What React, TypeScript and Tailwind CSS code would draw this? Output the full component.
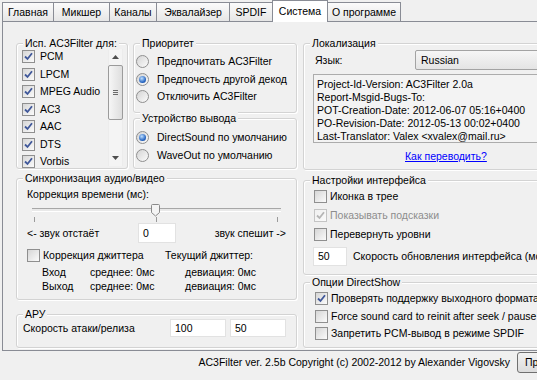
import React from 'react';

const tabs: [string, number, boolean?][] = [
  ['Главная', 52],
  ['Микшер', 57],
  ['Каналы', 48],
  ['Эквалайзер', 74],
  ['SPDIF', 44],
  ['Система', 56, true],
  ['О программе', 74],
];

function Check({ checked = false, disabled = false }: { checked?: boolean; disabled?: boolean }) {
  return (
    <span
      className={`w-[13px] h-[13px] shrink-0 border flex items-center justify-center bg-linear-to-br ${
        disabled ? 'border-[#c4c4c4] from-[#f0f0f0] to-[#fafafa]' : 'border-[#8f8f8f] from-[#d6d6d6] to-[#fbfbfb]'
      }`}
    >
      {checked && (
        <svg width="9" height="9" viewBox="0 0 9 9">
          <path d="M1 4.5 L3.5 7 L8 1.2" fill="none" stroke={disabled ? '#b5b5b5' : '#40589a'} strokeWidth="1.8" />
        </svg>
      )}
    </span>
  );
}

function Radio({ checked = false }: { checked?: boolean }) {
  return (
    <span className="w-[13px] h-[13px] shrink-0 rounded-full border border-[#8f8f8f] bg-linear-to-br from-[#d4d4d4] to-[#fbfbfb] flex items-center justify-center">
      {checked && (
        <span className="w-[7px] h-[7px] rounded-full bg-[radial-gradient(circle_at_40%_35%,#bfe0ff,#2463c0_65%,#173f86)]" />
      )}
    </span>
  );
}

function Group({ label, className, children }: { label: string; className?: string; children?: React.ReactNode }) {
  return (
    <div
      className={`relative shrink-0 rounded-[3px] border border-[#d3d3d3] shadow-[inset_1px_1px_0_#ffffff,1px_1px_0_#ffffff] ${className ?? ''}`}
    >
      <span className="absolute -top-[7px] left-[6px] px-[2px] bg-[#f0f0f0] leading-[13px] whitespace-nowrap">{label}</span>
      {children}
    </div>
  );
}

function Edit({ value, className }: { value: string; className?: string }) {
  return (
    <div className={`shrink-0 bg-white border border-[#e2e2e2] pl-[4px] flex items-center ${className ?? ''}`}>{value}</div>
  );
}

function CheckRow({ label, checked, disabled, h }: { label: string; checked?: boolean; disabled?: boolean; h: string }) {
  return (
    <div className={`flex items-center gap-[3px] whitespace-nowrap ${h}`}>
      <Check checked={checked} disabled={disabled} />
      <span className={disabled ? 'text-[#8d8d8d]' : ''}>{label}</span>
    </div>
  );
}

function RadioRow({ label, checked }: { label: string; checked?: boolean }) {
  return (
    <div className="flex items-center gap-[8px] h-[17.5px] whitespace-nowrap">
      <Radio checked={checked} />
      <span>{label}</span>
    </div>
  );
}

export default function App() {
  const formats = ['PCM', 'LPCM', 'MPEG Audio', 'AC3', 'AAC', 'DTS', 'Vorbis'];

  return (
    <div className="w-[537px] h-[380px] overflow-hidden bg-[#f0f0f0] text-black text-[10.5px] leading-[13px] font-['Liberation_Sans',Arial,sans-serif]">
      {/* tabs */}
      <div className="flex items-end h-[21px] ml-[2px] relative z-10">
        {tabs.map(([name, w, active]) => (
          <div
            key={name}
            style={{ width: w }}
            className={`-mr-px border border-b-0 border-[#898c95] flex items-center justify-center whitespace-nowrap ${
              active ? 'h-[22px] -mb-px bg-white relative z-10' : 'h-[19px] bg-linear-to-b from-[#fbfbfb] to-[#e6e6e6]'
            }`}
          >
            {name}
          </div>
        ))}
      </div>

      {/* page */}
      <div className="ml-[2px] w-[600px] h-[330px] border border-[#898c95] bg-[#f0f0f0] pt-[21px] pl-[13px] flex gap-[6px]">
        {/* left column */}
        <div className="w-[281px] flex flex-col">
          <div className="flex gap-[5px]">
            <Group label="Исп. AC3Filter для:" className="w-[112px] h-[126px]">
              <div className="flex pt-[4px] pl-[5px] pr-[4px] h-full overflow-hidden">
                <div className="flex-1 flex flex-col">
                  {formats.map((f) => (
                    <div key={f} className="flex items-center gap-[5px] h-[17.5px] shrink-0 whitespace-nowrap">
                      <Check checked />
                      <span>{f}</span>
                    </div>
                  ))}
                </div>
                <div className="w-[15px] h-[117px] mt-px flex flex-col items-center bg-[#f4f4f4] border-x border-[#ececec]">
                  <div className="h-[16px] flex items-center justify-center">
                    <svg width="7" height="4" viewBox="0 0 7 4">
                      <path d="M0 4 L3.5 0 L7 4 Z" fill="#4d4d4d" />
                    </svg>
                  </div>
                  <div className="w-[15px] h-[55px] rounded-[2px] border border-[#9b9b9b] bg-linear-to-r from-[#f6f6f6] to-[#dedede] flex flex-col items-center justify-center gap-[1px]">
                    <span className="w-[5px] h-px bg-[#6b6b6b]" />
                    <span className="w-[5px] h-px bg-[#6b6b6b]" />
                    <span className="w-[5px] h-px bg-[#6b6b6b]" />
                  </div>
                  <div className="flex-1" />
                  <div className="h-[16px] flex items-center justify-center">
                    <svg width="7" height="4" viewBox="0 0 7 4">
                      <path d="M0 0 L3.5 4 L7 0 Z" fill="#4d4d4d" />
                    </svg>
                  </div>
                </div>
              </div>
            </Group>
            <div className="w-[164px] flex flex-col">
              <Group label="Приоритет" className="h-[70px]">
                <div className="pt-[9px] pl-[2px] overflow-hidden">
                  <RadioRow label="Предпочитать AC3Filter" />
                  <RadioRow label="Предпочесть другой декод" checked />
                  <RadioRow label="Отключить AC3Filter" />
                </div>
              </Group>
              <Group label="Устройство вывода" className="h-[51px] mt-[5px]">
                <div className="pt-[10px] pl-[2px] overflow-hidden">
                  <RadioRow label="DirectSound по умолчанию" checked />
                  <RadioRow label="WaveOut по умолчанию" />
                </div>
              </Group>
            </div>
          </div>

          <Group label="Синхронизация аудио/видео" className="h-[122px] mt-[9px]">
            <div className="pl-[10px] pt-[9px]">Коррекция времени (мс):</div>
            <svg width="252" height="20" viewBox="0 0 252 20" className="ml-[14px] mt-[1px] block">
              <rect x="1" y="6" width="249" height="1" fill="#a7a7a7" />
              <rect x="1" y="7" width="249" height="2" fill="#e9e9e9" />
              <rect x="1" y="9" width="249" height="1" fill="#ffffff" />
              <path d="M121.5 2.5 h6 a1 1 0 0 1 1 1 v7 l-4 3.5 l-4 -3.5 v-7 a1 1 0 0 1 1 -1 z" fill="#f4f4f4" stroke="#8a8a8a" />
              <rect x="3" y="15" width="1" height="5" fill="#9a9a9a" />
              <rect x="125" y="15" width="1" height="5" fill="#9a9a9a" />
              <rect x="246" y="15" width="1" height="5" fill="#9a9a9a" />
            </svg>
            <div className="flex items-center h-[20px] mt-[1px] pl-[10px] pr-[10px] whitespace-nowrap">
              <span className="w-[111px]">&lt;- звук отстаёт</span>
              <Edit value="0" className="w-[38px] h-[20px]" />
              <span className="flex-1 text-right">звук спешит -&gt;</span>
            </div>
            <div className="flex items-center h-[13px] mt-[6px] pl-[10px] whitespace-nowrap">
              <Check />
              <span className="ml-[3px] w-[122px]">Коррекция джиттера</span>
              <span>Текущий джиттер:</span>
            </div>
            <div className="mt-[3px] pl-[25px] leading-[14px] whitespace-nowrap">
              <div className="flex">
                <span className="w-[48px]">Вход</span>
                <span className="w-[95px]">среднее: 0мс</span>
                <span>девиация: 0мс</span>
              </div>
              <div className="flex">
                <span className="w-[48px]">Выход</span>
                <span className="w-[95px]">среднее: 0мс</span>
                <span>девиация: 0мс</span>
              </div>
            </div>
          </Group>

          <Group label="АРУ" className="h-[34px] mt-[14px]">
            <div className="flex items-center h-[18px] mt-[4px] pl-[6px] whitespace-nowrap">
              <span className="w-[147px]">Скорость атаки/релиза</span>
              <Edit value="100" className="w-[56px] h-[18px]" />
              <Edit value="50" className="w-[56px] h-[18px] ml-[4px]" />
            </div>
          </Group>
        </div>

        {/* right column */}
        <div className="w-[290px] flex flex-col">
          <Group label="Локализация" className="h-[127px]">
            <div className="flex items-center h-[20px] mt-[6px] pl-[11px] whitespace-nowrap">
              <span className="w-[100px]">Язык:</span>
              <div className="w-[160px] h-[20px] border border-[#a3a3a3] rounded-[2px] bg-linear-to-b from-[#f6f6f6] to-[#e4e4e4] pl-[5px] flex items-center">
                Russian
              </div>
            </div>
            <div className="ml-[9px] mt-[4px] h-[69px] border border-[#acacac] bg-[#f3f3f3] pl-[3px] pt-[3px] whitespace-nowrap">
              <div>Project-Id-Version: AC3Filter 2.0a</div>
              <div>Report-Msgid-Bugs-To:</div>
              <div>POT-Creation-Date: 2012-06-07 05:16+0400</div>
              <div>PO-Revision-Date: 2012-05-13 00:02+0400</div>
              <div>Last-Translator: Valex &lt;xvalex@mail.ru&gt;</div>
            </div>
            <div className="mt-[7px] pl-[101px]">
              <span className="text-[#0000ff] underline">Как переводить?</span>
            </div>
          </Group>

          <Group label="Настройки интерфейса" className="h-[95px] mt-[10px]">
            <div className="pt-[6px] pl-[10px]">
              <CheckRow label="Иконка в трее" h="h-[19px]" />
              <CheckRow label="Показывать подсказки" checked disabled h="h-[19px]" />
              <CheckRow label="Перевернуть уровни" h="h-[19px]" />
            </div>
            <div className="flex items-center mt-[3px] pl-[9px] whitespace-nowrap">
              <Edit value="50" className="w-[34px] h-[19px]" />
              <span className="ml-[6px]">Скорость обновления интерфейса (мс)</span>
            </div>
          </Group>

          <Group label="Опции DirectShow" className="h-[66px] mt-[7px]">
            <div className="pt-[7px] pl-[11px]">
              <CheckRow label="Проверять поддержку выходного формата" checked h="h-[17.5px]" />
              <CheckRow label="Force sound card to reinit after seek / pause" h="h-[17.5px]" />
              <CheckRow label="Запретить PCM-вывод в режиме SPDIF" h="h-[17.5px]" />
            </div>
          </Group>
        </div>
      </div>

      {/* footer */}
      <div className="w-[592px] flex items-center mt-px h-[21px] gap-[7px] whitespace-nowrap">
        <span className="flex-1 text-right">AC3Filter ver. 2.5b Copyright (c) 2002-2012 by Alexander Vigovsky</span>
        <div className="w-[75px] h-[21px] shrink-0 border border-[#707070] rounded-[3px] bg-linear-to-b from-[#f2f2f2] to-[#dcdcdc] flex items-center pl-[7px]">
          Применить
        </div>
      </div>
    </div>
  );
}
